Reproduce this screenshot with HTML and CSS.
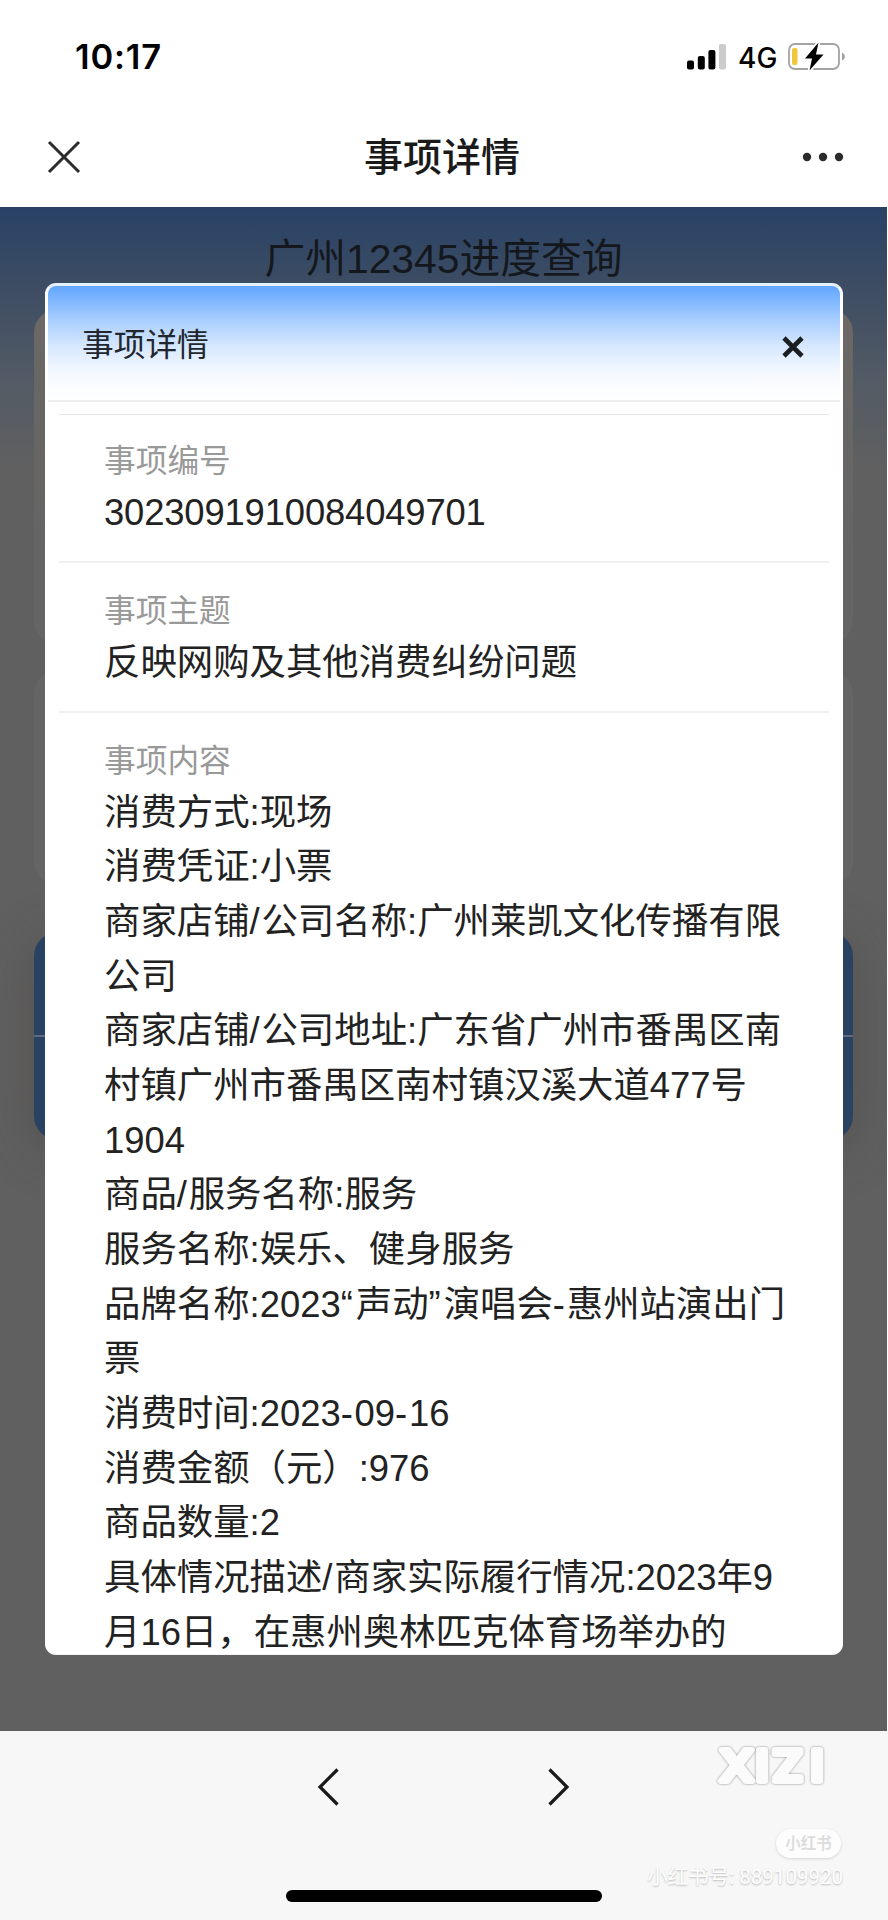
FILE: index.html
```html
<!DOCTYPE html>
<html lang="zh-CN">

<head>
    <meta charset="UTF-8">
    <meta name="viewport" content="width=device-width, initial-scale=1.0">
    <title>事项详情</title>
    <link rel="stylesheet" href="styles.css">
</head>

<body>
    <!-- 状态栏 -->
    <div class="status-bar">
        <span class="time">10:17</span>
        <div class="status-icons">
            <svg class="signal" width="40" height="28" viewBox="0 0 40 28">
                <rect x="0" y="17.5" width="7" height="9" rx="2" />
                <rect x="10.8" y="13" width="7" height="13.5" rx="2" />
                <rect x="21.4" y="7" width="7" height="19.5" rx="2" />
                <rect x="32" y="1" width="7" height="25.5" rx="2" fill="#ccc" />
            </svg>
            <span class="network">4G</span>
            <svg class="battery" width="58" height="28" viewBox="0 0 58 28">
                <rect x="1" y="1" width="50" height="25" rx="6" fill="none" stroke="#a3a3a3" stroke-width="1.8" />
                <rect x="4" y="5" width="5.5" height="17" rx="2" fill="#edc83a" />
                <path d="M54 9.5 Q57 11 57 13.5 Q57 16 54 17.5 Z" fill="#a3a3a3" />
                <path d="M30.5 -0.5 L17 15.5 H24 L21.5 27.5 L35.5 11.5 H28 Z" stroke="#fff" stroke-width="3.6" paint-order="stroke" />
            </svg>
        </div>
    </div>

    <!-- 导航栏 -->
    <div class="nav-bar">
        <svg width="34" height="34" viewBox="0 0 34 34">
            <path d="M2 2 L32 32 M32 2 L2 32" stroke="#2b2b2b" stroke-width="3" />
        </svg>
        <h1>事项详情</h1>
        <svg width="42" height="10" viewBox="0 0 42 10" fill="#2b2b2b">
            <circle cx="5" cy="5" r="4.2" />
            <circle cx="21" cy="5" r="4.2" />
            <circle cx="37" cy="5" r="4.2" />
        </svg>
    </div>

    <!-- 页面内容 -->
    <div class="page">
        <h2 class="page-title">广州12345进度查询</h2>
        <div class="card card-search"></div>
        <div class="card card-result"></div>
        <div class="page-buttons">
            <div class="page-btn"></div>
            <div class="page-btn"></div>
        </div>

        <!-- 弹窗 -->
        <div class="modal">
            <div class="modal-header">
                <span class="modal-title">事项详情</span>
                <svg class="close" width="22" height="22" viewBox="0 0 22 22">
                    <path d="M2 2 L20 20 M20 2 L2 20" stroke="#1c1f22" stroke-width="4.6" />
                </svg>
            </div>
            <div class="modal-body">
                <div class="item">
                    <div class="label">事项编号</div>
                    <div class="value number">3023091910084049701</div>
                </div>
                <div class="item">
                    <div class="label">事项主题</div>
                    <div class="value">反映网购及其他消费纠纷问题</div>
                </div>
                <div class="item">
                    <div class="label">事项内容</div>
                    <div class="value">
                        消费方式:现场<br>
                        消费凭证:小票<br>
                        商家店铺<span class="mark">/</span>公司名称:广州莱凯文化传播有限<br>公司<br>
                        商家店铺<span class="mark">/</span>公司地址:广东省广州市番禺区南<br>村镇广州市番禺区南村镇汉溪大道477号<br>1904<br>
                        商品<span class="mark">/</span>服务名称:服务<br>
                        服务名称:娱乐、健身服务<br>
                        品牌名称:2023<span class="quote">“</span>声动<span class="quote">”</span>演唱会<span class="mark">-</span>惠州站演出门<br>票<br>
                        消费时间:2023<span class="mark">-</span>09<span class="mark">-</span>16<br>
                        消费金额（元）:976<br>
                        商品数量:2<br>
                        具体情况描述<span class="mark">/</span>商家实际履行情况:2023年9<br>月16日，在惠州奥林匹克体育场举办的
                    </div>
                </div>
            </div>
        </div>
    </div>

    <!-- 底部工具栏 -->
    <div class="toolbar">
        <div class="arrows">
            <svg width="24" height="40" viewBox="0 0 24 40">
                <path d="M20.5 2.5 L3 20 L20.5 37.5" />
            </svg>
            <svg width="24" height="40" viewBox="0 0 24 40">
                <path d="M3.5 2.5 L21 20 L3.5 37.5" />
            </svg>
        </div>
        <div class="home-indicator"></div>
        <div class="watermark">
            <svg class="brand" width="112" height="52" viewBox="0 0 112 52">
                <text x="5 36 50.6 84" y="37.5" transform="scale(1.15 1)">XIZI</text>
            </svg>
            <span class="badge">小红书</span>
            <span class="account">小红书号: 889109920</span>
        </div>
    </div>
</body>

</html>
```
FILE: styles.css
```css
/* 基础样式 */
* {
    box-sizing: border-box;
}

body {
    margin: 0;
    width: 888px;
    height: 1920px;
    overflow: hidden;
    background-color: #fff;
    color: #222;
    font-family: "Liberation Sans", "Noto Sans CJK SC", sans-serif;
    display: flex;
    flex-direction: column;
}

h1,
h2 {
    margin: 0;
}

/* 状态栏 */
.status-bar {
    height: 107px;
    padding: 6px 42px 0 75px;
    display: flex;
    justify-content: space-between;
    align-items: center;
    color: #000;
}

.time {
    font-family: Inter, sans-serif;
    font-size: 34.5px;
    font-weight: 600;
    line-height: 40px;
    letter-spacing: 0.8px;
}

.status-icons {
    display: flex;
    align-items: center;
}

.network {
    font-family: Inter, sans-serif;
    font-size: 28px;
    font-weight: 500;
    line-height: 28px;
    margin: 2px 12px 0 11px;
    width: 38px;
}

/* 导航栏 */
.nav-bar {
    height: 100px;
    padding: 0 44px 0 47px;
    display: flex;
    justify-content: space-between;
    align-items: center;
}

.nav-bar h1 {
    font-size: 39px;
    font-weight: 500;
    line-height: 58px;
    padding-top: 2px;
    color: #1a1a1a;
    margin-left: 1px;
}

/* 页面背景 */
.page {
    position: relative;
    width: 887px;
    height: 1524px;
    padding: 0 34px;
    background: linear-gradient(#284266 0, #3c4c63 75px, #535b65 175px, #606060 260px, #606060 100%);
}

.page-title {
    font-size: 40.8px;
    font-weight: 400;
    line-height: 60px;
    padding-top: 22px;
    text-align: center;
    color: #14181d;
}

.card {
    border-radius: 24px;
    background-color: #656565;
}

.card-search {
    height: 335px;
    margin-top: 20px;
    background: linear-gradient(#6b6865, #656565 70%);
}

.card-result {
    height: 215px;
    margin-top: 26px;
}

.page-buttons {
    height: 208px;
    margin-top: 47px;
    border-radius: 24px;
    overflow: hidden;
    background-color: #2a4261;
    box-shadow: 0 10px 50px rgba(70, 65, 62, 0.45);
}

.page-btn {
    height: 103px;
}

.page-btn + .page-btn {
    border-top: 2px solid #5d6c80;
}

/* 弹窗 */
.modal {
    position: absolute;
    top: 76px;
    left: 45px;
    width: 798px;
    height: 1372px;
    border: 3px solid #fff;
    border-top-color: #e6f1ff;
    border-bottom-color: #f4f4f4;
    border-bottom-width: 1px;
    border-radius: 11px;
    background-color: #fff;
    overflow: hidden;
}

.modal-header {
    height: 116px;
    padding: 2px 36px 0 34px;
    display: flex;
    justify-content: space-between;
    align-items: center;
    border-bottom: 2px solid #eee;
    background: linear-gradient(#61a6ff 0, #a4cbff 28%, #d5e7ff 52%, #f5f9ff 76%, #fff 100%);
    font-size: 31.7px;
    color: #22272e;
}

.modal-title {
    margin-bottom: 4px;
}

.close {
    margin-top: 5px;
}

.modal-body {
    padding: 12px 11px 0;
}

.item {
    border-top: 2px solid #f0f0f0;
    padding: 25px 0 20.8px 45px;
}

.item:first-child {
    border-top: 1px solid #e6e6e6;
    padding: 23px 0 20.8px 45px;
}

.label {
    font-size: 31.7px;
    line-height: 47.6px;
    color: #999;
}

.value {
    font-size: 36.4px;
    line-height: 54.65px;
    white-space: nowrap;
}

.number {
    letter-spacing: -0.15px;
}

.mark {
    letter-spacing: 1.8px;
}

.quote {
    letter-spacing: 3px;
}

/* 底部工具栏 */
.toolbar {
    position: relative;
    height: 189px;
    padding-top: 36px;
    background-color: #f7f7f7;
}

.arrows {
    display: flex;
    justify-content: center;
    gap: 205px;
    margin-right: 1px;
}

.arrows path {
    fill: none;
    stroke: #1a1a1a;
    stroke-width: 3.2;
}

.home-indicator {
    width: 316px;
    height: 12px;
    margin: 83px 0 0 286px;
    border-radius: 6px;
    background-color: #000;
}

/* 水印 */
.watermark {
    position: absolute;
    top: 12px;
    right: 45px;
    display: flex;
    flex-direction: column;
    align-items: flex-end;
    color: #fff;
}

.brand {
    margin-right: 17px;
    overflow: visible;
    filter: drop-shadow(0 0 0.8px #888);
}

.brand text {
    font-family: Inter, sans-serif;
    font-size: 42px;
    font-weight: 500;
    fill: #fbfbfb;
    stroke: #fbfbfb;
    stroke-width: 6px;
    stroke-linejoin: round;
}

.badge {
    width: 65px;
    height: 29px;
    margin: 34px 2px 0 0;
    border-radius: 15px;
    background-color: #fdfdfd;
    box-shadow: 0 1px 3px rgba(0, 0, 0, 0.14);
    color: #ddd;
    font-size: 15.5px;
    font-weight: 700;
    line-height: 29px;
    text-align: center;
}

.account {
    margin-top: 4px;
    font-family: Roboto, "Noto Sans CJK SC", sans-serif;
    font-size: 20.5px;
    line-height: 30px;
    white-space: nowrap;
    text-shadow: 0 1px 2px rgba(0, 0, 0, 0.26);
}
```
